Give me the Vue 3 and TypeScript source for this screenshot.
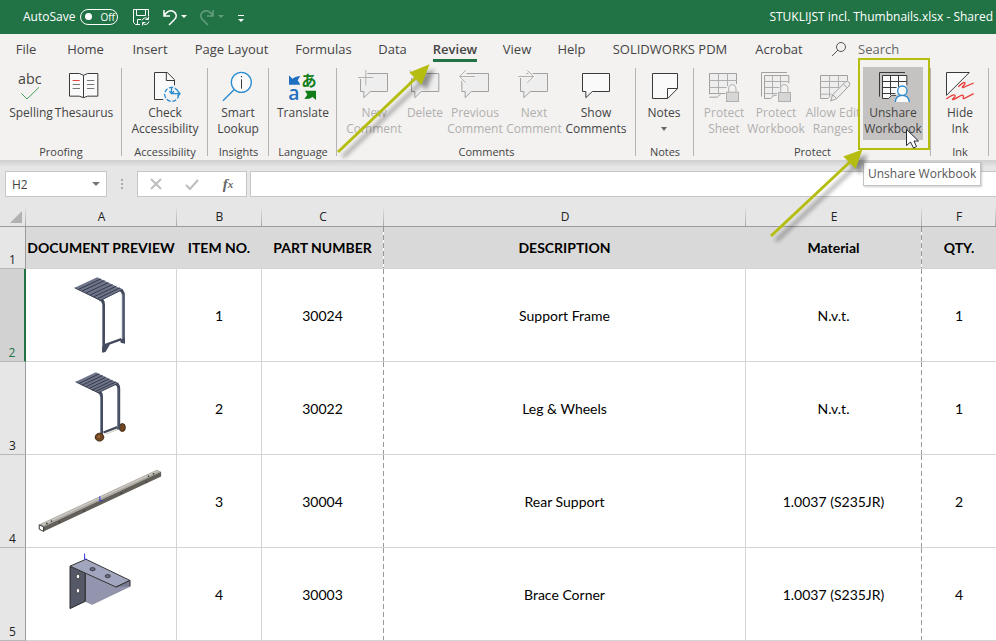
<script setup lang="ts">
import { ref } from 'vue'

interface Tool {
  id: string
  lines: string[]
  disabled?: boolean
  active?: boolean
  menu?: boolean
  box: string
}
interface Group {
  name: string
  key: string
  tools: Tool[]
}
interface Row {
  n: number
  item: number
  part: string
  description: string
  material: string
  qty: number
}

const tabs = ['File', 'Home', 'Insert', 'Page Layout', 'Formulas', 'Data', 'Review', 'View', 'Help', 'SOLIDWORKS PDM', 'Acrobat']
const activeTab = ref('Review')
const autoSave = ref(false)
const cellName = ref('H2')
const formula = ref('')
const search = ref('')

const groups: Group[] = [
  {
    name: 'Proofing', key: 'proofing', tools: [
      { id: 'spelling', lines: ['Spelling'], box: '45 213 96 96' },
      { id: 'thesaurus', lines: ['Thesaurus'], box: '204 213 96 96' },
    ],
  },
  { name: 'Accessibility', key: 'accessibility', tools: [{ id: 'check', lines: ['Check', 'Accessibility'], box: '447 213 96 96' }] },
  { name: 'Insights', key: 'insights', tools: [{ id: 'lookup', lines: ['Smart', 'Lookup'], box: '666 213 96 96' }] },
  { name: 'Language', key: 'language', tools: [{ id: 'translate', lines: ['Translate'], box: '111 213 96 96' }] },
  {
    name: 'Comments', key: 'comments', tools: [
      { id: 'new', lines: ['New', 'Comment'], disabled: true, box: '324 213 96 96' },
      { id: 'delete', lines: ['Delete'], disabled: true, box: '477 213 96 96' },
      { id: 'previous', lines: ['Previous', 'Comment'], disabled: true, box: '627 213 96 96' },
      { id: 'next', lines: ['Next', 'Comment'], disabled: true, box: '54 213 96 96' },
      { id: 'show', lines: ['Show', 'Comments'], box: '240 213 96 96' },
    ],
  },
  { name: 'Notes', key: 'notes', tools: [{ id: 'notes', lines: ['Notes'], menu: true, box: '444 213 96 96' }] },
  {
    name: 'Protect', key: 'protect', tools: [
      { id: 'sheet', lines: ['Protect', 'Sheet'], disabled: true, box: '624 213 96 96' },
      { id: 'workbook', lines: ['Protect', 'Workbook'], disabled: true, box: '60 213 96 96' },
      { id: 'ranges', lines: ['Allow Edit', 'Ranges'], disabled: true, box: '231 213 96 96' },
      { id: 'unshare', lines: ['Unshare', 'Workbook'], active: true, box: '411 213 96 96' },
    ],
  },
  { name: 'Ink', key: 'ink', tools: [{ id: 'ink', lines: ['Hide', 'Ink'], box: '612 213 96 96' }] },
]

const letters = ['A', 'B', 'C', 'D', 'E', 'F']
const rows: Row[] = [
  { n: 2, item: 1, part: '30024', description: 'Support Frame', material: 'N.v.t.', qty: 1 },
  { n: 3, item: 2, part: '30022', description: 'Leg & Wheels', material: 'N.v.t.', qty: 1 },
  { n: 4, item: 3, part: '30004', description: 'Rear Support', material: '1.0037 (S235JR)', qty: 2 },
  { n: 5, item: 4, part: '30003', description: 'Brace Corner', material: '1.0037 (S235JR)', qty: 4 },
]
</script>

<template>
  <div class="window">
    <header class="titlebar">
      <label class="autosave">
        <span>AutoSave</span>
        <input v-model="autoSave" type="checkbox" />
        <span class="switch"><i></i>{{ autoSave ? 'On' : 'Off' }}</span>
      </label>
      <div class="quick">
        <button type="button" aria-label="Save">
          <svg class="qi" viewBox="0 0 18 18"><path d="M5 16.5H3.5L1.5 14.5V1.5H16.5V8M4.500 1.500V7.500H13.500V1.500M5.500 16.500V11.500H9M5 16.500H8" /><path d="M10 12.500A3.600 3.600 0 0 1 16 11M16.500 8.500V11.500H13.500M17 13.500A3.600 3.600 0 0 1 11 15.500M10.500 17.500V14.500H13.500" /></svg>
        </button>
        <button type="button" aria-label="Undo" class="with-caret">
          <svg class="qi" viewBox="0 0 18 18"><path class="thick" d="M3 2V8H9M3 8C5 4 9 1.500 12.500 3.500C16 5.500 16 9 13.500 11.500L8 17" /></svg>
          <i class="caret"></i>
        </button>
        <button type="button" aria-label="Redo" class="with-caret faded" disabled>
          <svg class="qi" viewBox="0 0 18 18"><path class="thick" d="M15 2V8H9M15 8C13 4 9 1.500 5.500 3.500C2 5.500 2 9 4.500 11.500L10 17" /></svg>
          <i class="caret"></i>
        </button>
        <button type="button" aria-label="Customize toolbar" class="customize"><i class="bar"></i><i class="caret"></i></button>
      </div>
      <span class="doc">STUKLIJST incl. Thumbnails.xlsx - Shared</span>
    </header>

    <nav class="tabs">
      <button v-for="t in tabs" :key="t" type="button" :class="{ current: t === activeTab }" @click="activeTab = t">
        <span>{{ t }}</span>
      </button>
      <label class="search">
        <svg viewBox="0 0 16 16" width="16" height="16"><circle cx="10" cy="6" r="4.500" /><path d="M6.800 9.200L1 15" /></svg>
        <input v-model="search" type="text" placeholder="Search" aria-label="Search" />
      </label>
    </nav>

    <section class="ribbon">
      <div v-for="g in groups" :key="g.key" class="group" :class="g.key">
        <div class="tools">
          <button v-for="t in g.tools" :key="t.id" type="button" class="tool" :class="{ active: t.active }" :disabled="t.disabled">
            <svg class="icon" :viewBox="t.box">
              <template v-if="t.id === 'spelling'">
                <text x="54" y="251" class="abc">abc</text>
                <path class="green" d="M64 280L81 297L117 262" />
              </template>
              <template v-else-if="t.id === 'thesaurus'">
                <path class="paper" d="M208.500 220.500H238L250.500 226L263 220.500H293.500V288.500H263L250.500 293L238 288.500H208.500Z" />
                <path class="ln" d="M250.500 226V293" />
                <path class="red" d="M218 241.500H239" />
                <path class="grey" d="M218 253.500H240M218 265.500H240M261 241.500H283M261 253.500H283M261 265.500H283" />
              </template>
              <template v-else-if="t.id === 'check'">
                <path class="paper" d="M490 298.500H463.500V217.500H502L523.500 239V256" />
                <path class="ln" d="M499 217.500V241.500H523.500" />
                <circle class="blue" cx="515" cy="283" r="21" stroke-dasharray="13 5" />
                <path class="blue" d="M514.500 260V281H540M508 274L515 281L522 274M533 274L540 281L533 288" />
              </template>
              <template v-else-if="t.id === 'lookup'">
                <circle class="blue fillw" cx="724" cy="247" r="30" />
                <path class="blue" d="M702 269L669 302" />
                <path class="ln" d="M724.500 238V266M724.500 228V232" />
              </template>
              <template v-else-if="t.id === 'translate'">
                <path fill="#1f6fc0" d="M117 226L127 236L138 230L151 228L143 241L151 254H117Z" />
                <text x="115" y="299" class="la">a</text>
                <text x="154" y="259" class="ja">あ</text>
                <path fill="#117d17" d="M198 300L188 291L178 296L163 297L172 284L165 272H198Z" />
              </template>
              <template v-else-if="t.id === 'new'">
                <path class="dim" d="M347 220.500H412.500V274.500H361L341.500 293V274.500H331.500V234" />
                <path class="dimln halo" d="M347.500 210V256M324 232.500H370" />
                <path class="dimln" d="M347.500 210V256M324 232.500H370" />
              </template>
              <template v-else-if="t.id === 'delete'">
                <path class="dim" d="M500 220.500H566.500V274.500H514L494.500 293V274.500H484.500V234" />
                <path class="dimln" d="M478 210L515 247M478 247L515 210" />
              </template>
              <template v-else-if="t.id === 'previous'">
                <path class="dim" d="M650 220.500H715.500V274.500H664L645.500 293V274.500H635.500V240" />
                <path class="dimln halo" d="M675 229.500H630M647 211L629 229.500L647 248" />
                <path class="dimln" d="M675 229.500H630M647 211L629 229.500L647 248" />
              </template>
              <template v-else-if="t.id === 'next'">
                <path class="dim" d="M80 220.500H142.500V274.500H91L71.500 293V274.500H61.500V232" />
                <path class="dimln halo" d="M55 229.500H100M82 211L101 229.500L82 248" />
                <path class="dimln" d="M55 229.500H100M82 211L101 229.500L82 248" />
              </template>
              <template v-else-if="t.id === 'show'">
                <path class="paper" d="M247.500 220.500H328.500V274.500H277L257.500 293V274.500H247.500Z" />
              </template>
              <template v-else-if="t.id === 'notes'">
                <path class="paper" d="M457.500 220.500H532.500V266L503 295.500H457.500Z" />
                <path class="ln" d="M502.500 295V265.500H532" />
              </template>
              <template v-else-if="t.id === 'sheet'">
                <path class="dim" d="M709.500 252V220.500H628.500V283M628 280.500H676M628 291.500H652L662 282" />
                <path class="dimln" d="M655.500 220V281M682.500 220V258M628 241.500H709M628 262.500H680" />
                <path class="dimln" d="M686 276V267A11 13 0 0 1 708 267V276" />
                <rect class="lock" x="679.500" y="276.500" width="36" height="28" />
              </template>
              <template v-else-if="t.id === 'workbook'">
                <path class="dimd" d="M64.500 290V217.500H141" />
                <path class="dim" d="M146.500 250V226.500H73.500V295.500H92L102 286H110" />
                <path class="dimln" d="M97.500 227V286M121.500 227V262M74 244.500H146M74 262.500H118M74 280.500H112" />
                <path class="dimln" d="M122 277V267A11 13 0 0 1 144 267V277" />
                <rect class="lock" x="115.500" y="277.500" width="36" height="27" />
              </template>
              <template v-else-if="t.id === 'ranges'">
                <path class="dim" d="M322.500 242V226.500H241.500V295.500H264L272 287" />
                <path class="dimln" d="M268.500 227V288M295.500 227V262M242 244.500H316M242 262.500H298M242 282.500H275" />
                <path class="pencil" d="M272 303L278 284L316 246Q322 241 328 247Q331 253 327 258L290 296ZM278 284L290 296M310 252L321 263" />
              </template>
              <template v-else-if="t.id === 'unshare'">
                <path class="ln" d="M418.500 290V217.500H495" />
                <path class="paper" d="M468 286H455L446 295.500H427.500V226.500H500.500V256" />
                <path class="ln" d="M451.500 227V286M475.500 227V262M428 244.500H500M428 262.500H470M428 280.500H466" />
                <path class="blue fillw" d="M466 306Q467 286 487 286Q506 286 508 306" />
                <circle class="blue fillw" cx="487" cy="272" r="14" />
              </template>
              <template v-else>
                <path class="paper" d="M619.500 217.500H688L619.500 286Z" />
                <path class="red scribble" d="M619 297C630 288 642 282 645 286C648 292 633 298 639 299C650 296 664 283 669 286C673 290 666 297 672 296L701 281M655 260C664 251 674 244 675 249C676 256 662 262 669 263L701 249" />
              </template>
            </svg>
            <span v-for="l in t.lines" :key="l" class="line">{{ l }}</span>
            <i v-if="t.menu" class="menu"></i>
          </button>
        </div>
        <div class="group-name">{{ g.name }}</div>
      </div>
    </section>

    <section class="formula-bar">
      <div class="namebox">
        <input v-model="cellName" type="text" aria-label="Name box" />
        <button type="button" aria-label="Choose name"><i></i></button>
      </div>
      <span class="grip"><i></i><i></i><i></i></span>
      <div class="actions">
        <button type="button" aria-label="Cancel"><svg viewBox="0 0 14 14" width="14" height="14"><path d="M2 2L12 12M12 2L2 12" /></svg></button>
        <button type="button" aria-label="Enter"><svg viewBox="0 0 14 14" width="14" height="14"><path class="tick" d="M1 8L5 12L13 3" /></svg></button>
        <button type="button" class="fx" aria-label="Insert function"><em>f</em><sub>x</sub></button>
      </div>
      <input v-model="formula" class="formula" type="text" aria-label="Formula" />
    </section>

    <table class="sheet">
      <colgroup>
        <col class="c0" /><col class="ca" /><col class="cb" /><col class="cc" /><col /><col class="ce" /><col class="cf" />
      </colgroup>
      <thead>
        <tr>
          <th class="corner"><i></i></th>
          <th v-for="l in letters" :key="l" scope="col">{{ l }}</th>
        </tr>
      </thead>
      <tbody>
        <tr class="titles">
          <th scope="row" class="num">1</th>
          <td>DOCUMENT PREVIEW</td>
          <td>ITEM NO.</td>
          <td class="break">PART NUMBER</td>
          <td>DESCRIPTION</td>
          <td class="break">Material</td>
          <td>QTY.</td>
        </tr>
        <tr v-for="r in rows" :key="r.n" class="data">
          <th scope="row" class="num" :class="{ selected: r.n === 2 }">{{ r.n }}</th>
          <td class="preview">
            <svg v-if="r.n === 2" viewBox="18 12 453 276">
              <path class="leg" d="M298 72Q312 76 312 90V234M240 103Q252 104 252 118V260" />
              <path class="shine" d="M310 88V230M249 118V258" />
              <path class="crossbar" d="M256 241L306 223" />
              <path class="plate" d="M248 246L272 238L258 262L248 264ZM302 224L317 220V237L304 234Z" />
              <path class="panel" d="M165 68L233 36L310 73L243 106Z" />
              <path class="slat" d="M176 73L244 41M187 78L255 46M199 84L267 52M211 90L279 58M223 95L291 63M233 101L302 68" />
              <path class="rim" d="M165 68L243 106L310 73" />
            </svg>
            <svg v-else-if="r.n === 3" viewBox="18 291 453 276">
              <path class="crossbar" d="M252 503L296 486" />
              <path class="rail" d="M258 508L300 492" />
              <ellipse class="wheel" cx="309" cy="488" rx="9" ry="12" />
              <path class="leg" d="M286 354Q298 356 298 370V494M236 380Q246 382 246 394V508" />
              <path class="shine" d="M295 370V488M243 394V506" />
              <ellipse class="wheel" cx="240" cy="517" rx="13" ry="12" />
              <ellipse class="hub" cx="238" cy="516" rx="4" ry="4" />
              <path class="panel" d="M168 350L229 321L297 354L236 383Z" />
              <path class="slat" d="M178 355L239 326M188 360L249 331M198 365L259 336M208 370L269 341M218 375L279 346M228 379L289 350" />
              <path class="rim" d="M168 350L236 383L297 354" />
            </svg>
            <svg v-else-if="r.n === 4" viewBox="18 0 453 276">
              <path fill="#aaa79f" d="M57 209L413 44L426 50L71 216Z" />
              <path fill="#625f59" d="M71 216L426 50V64L71 230Z" />
              <path fill="#c9c6bf" d="M64 208L412 47L418 49L70 211Z" />
              <path fill="#fff" stroke="#333" stroke-width="3" d="M58 210L71 216V230L58 223Z" />
              <path class="hole-dots" d="M79 206h4M93 199h4M386 63h4M401 56h4M118 202h3M192 168h3M304 115h3M380 80h3" />
              <path class="axis" d="M241 124V137H249" />
            </svg>
            <svg v-else viewBox="18 279 453 276">
              <path fill="#9295ad" stroke="#55586a" d="M197 350L290 396L332 376V394L218 449L197 440Z" />
              <path fill="#555866" stroke="#222" stroke-width="3" d="M151 333L197 352V439L151 461Z" />
              <path fill="#a2a5be" stroke="#333" stroke-width="3" d="M151 333L199 312L332 376L290 396Z" />
              <path fill="#777b92" stroke="#333" stroke-width="3" d="M290 396L332 376V394" />
              <ellipse cx="219" cy="342" rx="8" ry="5" fill="#686b80" stroke="#222" stroke-width="2" />
              <ellipse cx="265" cy="363" rx="8" ry="5" fill="#686b80" stroke="#222" stroke-width="2" />
              <ellipse cx="175" cy="364" rx="5" ry="7" fill="#fff" stroke="#222" stroke-width="2" />
              <ellipse cx="175" cy="407" rx="5" ry="7" fill="#fff" stroke="#222" stroke-width="2" />
              <path class="axis" d="M195 295V312H202" />
            </svg>
          </td>
          <td>{{ r.item }}</td>
          <td class="break">{{ r.part }}</td>
          <td>{{ r.description }}</td>
          <td class="break">{{ r.material }}</td>
          <td>{{ r.qty }}</td>
        </tr>
      </tbody>
    </table>

    <div class="tooltip" role="tooltip">Unshare Workbook</div>

    <svg class="marks" width="996" height="260" viewBox="0 0 996 260" aria-hidden="true">
      <rect x="859" y="59" width="70" height="90" fill="none" stroke="#b5bd11" stroke-width="2" />
      <g class="arrow">
        <path d="M338 152L418 76" />
        <path class="head" d="M427 67L421 82L412 73Z" />
      </g>
      <g class="arrow">
        <path d="M771 236L852 160" />
        <path class="head" d="M860 152L855 166L846 157Z" />
      </g>
      <path d="M906.500 129.500V145.500L910.500 142L913.500 148L916.500 146.500L914 141H918.500Z" fill="#fff" stroke="#222b38" />
    </svg>
  </div>
</template>

<style>
body {
  margin: 0;
  background: #fff;
}
</style>

<style scoped>
.window {
  position: relative;
  overflow: hidden;
  font: 12px/16px 'Open Sans', 'Noto Sans', sans-serif;
  color: #444;
}
button, input {
  font: inherit;
  color: inherit;
  margin: 0;
  padding: 0;
  border: 0;
  background: none;
  outline: none;
}
svg { display: block; overflow: visible; }

.titlebar {
  height: 34px;
  display: flex;
  align-items: center;
  padding: 0 3px 1px 23px;
  box-sizing: border-box;
  background: #217346;
  color: #fff;
}
.autosave { display: flex; align-items: center; gap: 5px; position: relative; }
.autosave input { position: absolute; opacity: 0; }
.switch {
  display: flex;
  align-items: center;
  gap: 8px;
  box-sizing: border-box;
  width: 38px;
  height: 16px;
  padding-left: 4px;
  border: 1px solid #fff;
  border-radius: 8px;
  font-size: 10px;
}
.switch i { flex: none; width: 7px; height: 7px; border-radius: 50%; background: #fff; }
.quick { display: flex; align-items: center; gap: 11px; margin-left: 14px; }
.quick button { display: flex; align-items: center; gap: 2px; }
.qi { width: 18px; height: 18px; fill: none; stroke: #fff; stroke-width: 1; }
.thick { stroke-width: 1.5; }
.caret { border: 3px solid transparent; border-top-color: #fff; border-bottom: 0; }
.faded { opacity: 0.3; }
.quick .customize { flex-direction: column; gap: 3px; margin: 4px 0 0 3px; }
.bar { width: 6px; height: 1px; background: #fff; }
.doc { margin-left: auto; white-space: pre; }

.tabs {
  display: grid;
  grid-template-columns: 52px 67px 62px 101px 83px 55px 70px 54px 55px 142px 76px 1fr;
  height: 32px;
  background: #f3f2f1;
  font-size: 13px;
}
.tabs button { display: flex; justify-content: center; align-items: flex-start; white-space: nowrap; }
.tabs button span { padding: 7px 0 2px; border-bottom: 3px solid transparent; }
.tabs .current span { border-color: #217346; font-weight: 600; }
.search { display: flex; align-items: center; gap: 11px; padding: 0 0 2px 14px; }
.search svg { fill: none; stroke: #555; }
.search input { width: 100px; }
.search input::placeholder { color: #666; opacity: 1; }

.ribbon {
  display: flex;
  height: 94px;
  background: #f3f2f1;
}
.group {
  box-sizing: border-box;
  height: 91px;
  padding-top: 1px;
  background: linear-gradient(#b5b3b1, #b5b3b1) right 2px / 1px 88px no-repeat;
}
.tools { display: grid; height: 73px; }
.tool {
  display: flex;
  flex-direction: column;
  align-items: center;
  padding-top: 4px;
  white-space: nowrap;
}
.tool.active { background: #c5c3c1; }
.tool:disabled { color: #b1afad; }
.line { height: 16px; }
.icon + .line { margin-top: 2px; }
.icon { width: 32px; height: 32px; flex: none; }
.group-name { text-align: center; padding-top: 4px; font-size: 11px; }
.menu { border: 3px solid transparent; border-top: 4px solid #666; border-bottom: 0; margin-top: 6px; }
.proofing { width: 122px; }
.proofing .tools { padding-left: 5px; grid-template-columns: 52px 54px; }
.accessibility { width: 86px; }
.accessibility .tools { padding-left: 10px; grid-template-columns: 66px; }
.insights { width: 61px; }
.insights .tools { padding-left: 4px; grid-template-columns: 52px; }
.language { width: 68px; }
.language .tools { padding-left: 6px; grid-template-columns: 56px; }
.comments { width: 299px; }
.comments .tools { padding-left: 9px; grid-template-columns: 56px 46px 54px 64px 60px; }
.notes { width: 58px; }
.notes .tools { padding-left: 3px; grid-template-columns: 50px; }
.protect { width: 237px; }
.protect .tools { padding-left: 5px; grid-template-columns: 50px 54px 60px 60px; }
.ink { width: 58px; }
.ink .tools { padding-left: 3px; grid-template-columns: 52px; }

.icon path, .icon circle { stroke-width: 3; }
.paper { fill: #fafafa; stroke: #3a3a3a; }
.ln { fill: none; stroke: #3a3a3a; }
.grey { fill: none; stroke: #797774; }
.red { fill: none; stroke: #e8413c; }
.icon .scribble { stroke-width: 4; }
.green { fill: none; stroke: #46a35e; }
.blue { fill: none; stroke: #2b8bd0; }
.icon .blue { stroke-width: 4; }
.fillw { fill: #fafafa; }
.dim { fill: #eeeeee; stroke: #a2a09e; }
.dimd { fill: none; stroke: #a2a09e; }
.dimln { fill: none; stroke: #b1afad; }
.icon .halo { stroke: #f3f2f1; stroke-width: 9; }
.lock { fill: #d6d6d6; stroke: #b1afad; stroke-width: 3; }
.pencil { fill: #eeeeee; stroke: #a2a09e; }
.abc { font-size: 43px; fill: #444; }
.la { font-size: 58px; font-weight: 600; fill: #1f6fc0; }
.ja { font: 700 46px 'Noto Sans CJK JP', sans-serif; fill: #117d17; }
.icon path[fill] { stroke: none; }

.formula-bar {
  display: flex;
  align-items: flex-start;
  height: 46px;
  box-sizing: border-box;
  padding: 11px 0 0 5px;
  background: linear-gradient(#cfcfcf, #e6e6e6 7px);
}
.namebox, .actions, .formula {
  box-sizing: border-box;
  height: 26px;
  border: 1px solid #c6c6c6;
  background: #fff;
}
.namebox { display: flex; align-items: center; width: 102px; }
.namebox input { flex: 1; min-width: 0; padding: 1px 0 0 6px; }
.namebox button { width: 20px; }
.namebox i { display: block; width: 0; margin-left: 6px; border: 4px solid transparent; border-top-color: #777; border-bottom: 0; }
.grip { display: flex; flex-direction: column; gap: 2px; width: 30px; padding-top: 8px; align-items: center; }
.grip i { width: 2px; height: 2px; background: #aaa; }
.actions { display: grid; grid-template-columns: repeat(3, 36px); width: 110px; }
.actions button { display: flex; justify-content: center; align-items: center; }
.actions svg { fill: none; stroke: #bdbdbd; stroke-width: 2; }
.actions .fx { font: 15px/20px 'Liberation Serif', serif; font-weight: 700; color: #666; }
.fx sub { font: italic 700 11px 'Liberation Serif', serif; }
.formula { flex: 1; min-width: 0; margin-left: 3px; border-right: 0; padding: 0 8px; }

.sheet {
  width: 100%;
  table-layout: fixed;
  border-collapse: separate;
  border-spacing: 0;
}
.c0 { width: 26px; }
.ca { width: 151px; }
.cb { width: 85px; }
.cc { width: 122px; }
.ce { width: 176px; }
.cf { width: 74px; }
th, td { padding: 0; box-sizing: border-box; text-align: center; }
thead th {
  height: 21px;
  padding-top: 2px;
  font-weight: 400;
  color: #222;
  background: linear-gradient(#e6e6e6, #a8a8a8) right / 1px 100% no-repeat #e6e6e6;
  border-bottom: 1px solid #9b9b9b;
}
.corner i { display: block; width: 0; margin-left: 10px; border-left: 12px solid transparent; border-bottom: 12px solid #b2b2b2; }
.num {
  background: #e6e6e6;
  border-right: 1px solid #9b9b9b;
  border-bottom: 1px solid #b8b8b8;
  font-weight: 400;
  color: #222;
  vertical-align: bottom;
}
.selected { background: #d2d2d2; border-right: 2px solid #217346; color: #217346; }
td {
  font: 14px/18px Lato, sans-serif;
  color: #000;
  padding-top: 2px;
  border-right: 1px solid #d4d4d4;
  border-bottom: 1px solid #d4d4d4;
}
td:last-child { border-right: 0; }
.break {
  padding-right: 1px;
  border-right: 0;
  background: repeating-linear-gradient(#999 0 5px, #fff 5px 8px) right / 1px 100% no-repeat;
}
.titles td { height: 42px; padding-top: 1px; background-color: #d9d9d9; font-weight: 700; border-right-color: #d9d9d9; }
.data td { height: 93px; }
.data .preview { padding: 0; }
.preview svg { width: 100%; height: 92px; }
.leg { fill: none; stroke: #454b5e; stroke-width: 9; }
.shine { fill: none; stroke: #858b9e; stroke-width: 3; }
.crossbar { fill: none; stroke: #454b5e; stroke-width: 7; }
.plate { fill: #454b5e; }
.rail { fill: none; stroke: #b9b39d; stroke-width: 2; }
.panel { fill: #6e748a; }
.slat { fill: none; stroke: #343948; stroke-width: 3; }
.rim { fill: none; stroke: #3a3f50; stroke-width: 3; }
.wheel { fill: #70451f; stroke: #3d2917; stroke-width: 3; }
.hub { fill: #a06a3c; }
.hole-dots { stroke: #222; stroke-width: 4; }
.axis { fill: none; stroke: #3131e0; stroke-width: 3; }

.tooltip {
  position: absolute;
  left: 863px;
  top: 162px;
  padding: 3px 4px;
  border: 1px solid #c3c3c3;
  background: #fff;
  box-shadow: 1px 1px 2px rgba(0, 0, 0, 0.2);
  color: #575757;
  white-space: nowrap;
}
.marks { position: absolute; left: 0; top: 0; pointer-events: none; }
.arrow { fill: none; stroke: #b5bd11; stroke-width: 3; filter: drop-shadow(5px 5px 2px rgba(0, 0, 0, 0.4)); }
.head { fill: #b5bd11; }
</style>
